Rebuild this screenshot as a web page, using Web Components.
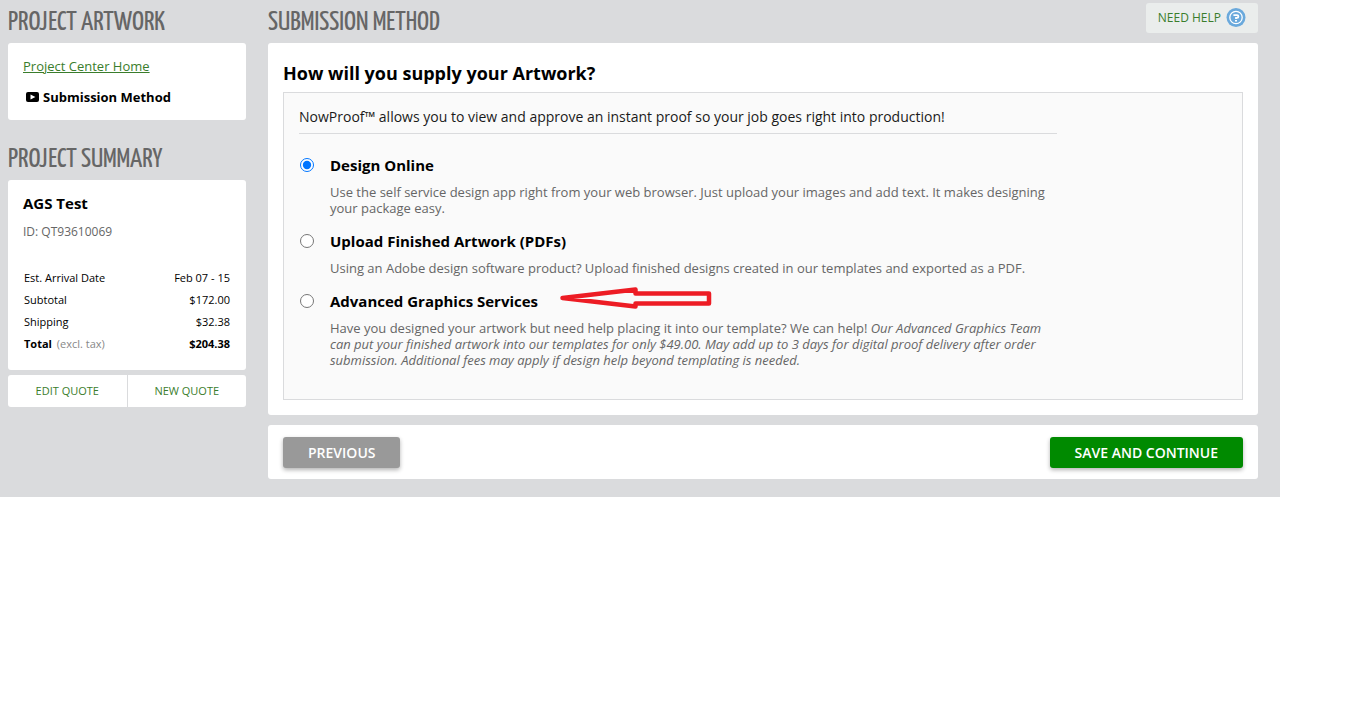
<!DOCTYPE html>
<html lang="en">
<head>
<meta charset="utf-8">
<meta name="viewport" content="width=device-width, initial-scale=1">
<title>Submission Method</title>
<style>
body{margin:0;background:#fff;color:#000;font-family:"Open Sans","Noto Sans",sans-serif;
--grey:#dadbdd;--green:#3a7d2c;--muted:#666}
</style>
</head>
<body>
<project-page>
  <project-nav slot="side"></project-nav>
  <project-summary slot="side"></project-summary>
  <submission-method></submission-method>
</project-page>
<script>
const define = (name, html) => customElements.define(name, class extends HTMLElement {
  constructor() {
    super();
    this.attachShadow({mode: 'open'}).innerHTML = '<style>*{box-sizing:border-box}</style>' + html;
  }
});

define('section-title', `
<style>
:host{display:block;padding-top:3px}
h2{margin:0;font:400 28px/40px "Yanone Kaffeesatz","Liberation Sans Narrow","Roboto Condensed","Liberation Sans",sans-serif;color:var(--muted);text-transform:uppercase;white-space:nowrap}
</style>
<h2><slot></slot></h2>`);

define('white-card', `
<style>
:host{display:block;background:#fff;border-radius:3px;padding:15px;box-sizing:border-box}
</style>
<slot></slot>`);

define('action-button', `
<style>
:host{display:block}
button{display:block;height:31px;padding:0 25px;border:0;border-radius:3px;background:var(--button,#999);color:#fff;font:600 14px/31px "Open Sans",sans-serif;text-transform:uppercase;box-shadow:0 2px 4px rgba(0,0,0,.3);cursor:pointer}
</style>
<button type="button"><slot></slot></button>`);

define('project-page', `
<style>
:host{display:block}
.page{display:flex;gap:22px;max-width:1280px;padding:0 22px 18px 8px;background:var(--grey)}
aside{flex:0 0 238px;display:flex;flex-direction:column;gap:17px}
main{flex:1;min-width:0}
</style>
<div class="page"><aside><slot name="side"></slot></aside><main><slot></slot></main></div>`);

define('project-nav', `
<style>
:host{display:block}
nav{font-size:13px;line-height:16px}
a{display:block;color:var(--green)}
.current{display:flex;align-items:center;gap:4px;margin:15px 0 0 3px;font-weight:700;color:#000;text-decoration:none}
</style>
<section-title>Project Artwork</section-title>
<white-card><nav>
  <a href="#home">Project Center Home</a>
  <a class="current" href="#method" aria-current="page"><svg width="13" height="10" viewBox="0 0 13 10" aria-hidden="true"><rect width="13" height="10" rx="2"/><path d="M4.5 2.4v5.2L9.4 5z" fill="#fff"/></svg>Submission Method</a>
</nav></white-card>`);

define('project-summary', `
<style>
:host{display:block}
h3{margin:0;font-size:15px;font-weight:700;line-height:16px}
p{margin:13px 0 27px;font-size:12px;line-height:16px;color:var(--muted)}
table{width:100%;border-collapse:collapse;font-size:11px;line-height:22px}
th,td{padding:0 1px;font-weight:400;text-align:left}
td{text-align:right}
.total th,.total td{font-weight:700}
small{margin-left:2px;font-size:11px;font-weight:400;color:#888}
.links{display:flex;gap:1px;margin-top:5px}
.links a{flex:1;background:#fff;border-radius:3px 0 0 3px;font-size:11px;line-height:32px;text-align:center;text-decoration:none;color:var(--green)}
.links a:last-child{border-radius:0 3px 3px 0}
</style>
<section-title>Project Summary</section-title>
<white-card>
  <h3>AGS Test</h3>
  <p>ID: QT93610069</p>
  <table>
    <tr><th scope="row">Est. Arrival Date</th><td>Feb 07 - 15</td></tr>
    <tr><th scope="row">Subtotal</th><td>$172.00</td></tr>
    <tr><th scope="row">Shipping</th><td>$32.38</td></tr>
    <tr class="total"><th scope="row">Total <small>(excl. tax)</small></th><td>$204.38</td></tr>
  </table>
</white-card>
<div class="links"><a href="#edit">EDIT QUOTE</a><a href="#new">NEW QUOTE</a></div>`);

define('help-button', `
<style>
:host{display:block}
button{display:flex;align-items:center;gap:5px;height:30px;padding:0 12px;border:0;border-radius:3px;background:#eaedec;color:var(--green);font:400 12px/30px "Open Sans",sans-serif;cursor:pointer}
</style>
<button type="button">NEED HELP
<svg width="20" height="20" viewBox="0 0 20 20" fill="none" aria-hidden="true"><circle cx="10" cy="9.500" r="9.500" fill="#6aa9dc"/><circle cx="10" cy="9.500" r="6.200" stroke="#fff" stroke-width="1.300"/><path d="M7.400 7.200H11q1.400 0 1.400 1.300T11 9.800h-1v1.300" stroke="#fff" stroke-width="1.800"/><path d="M9 12h2v1.500H9z" fill="#fff"/></svg>
</button>`);

define('submission-method', `
<style>
:host{display:block}
header{display:flex;justify-content:space-between;align-items:flex-start}
help-button{margin-top:3px}
h1{margin:4px 0 7px;font-size:18px;font-weight:700;line-height:23px}
fieldset{margin:0;min-width:0;padding:15px 15px 31px;border:1px solid #dadbdd;background:#fafafa}
.inner{max-width:758px}
.lead{margin:0 0 21px;padding-bottom:7px;border-bottom:1px solid #dadbdd;font-size:14px;line-height:18px;color:#1a1a1a}
.option{display:grid;grid-template-columns:14px 1fr;column-gap:17px;row-gap:9px;align-items:center}
.option + .option{margin-top:15px}
input{width:14px;height:14px;margin:0 1px}
label{justify-self:start;position:relative;font-size:15px;font-weight:700;line-height:20px}
.option p{grid-column:2;margin:0;font-size:13px;line-height:16px;color:var(--muted)}
svg.arrow{position:absolute;left:calc(100% + 20px);top:-4px;overflow:visible}
footer{display:flex;justify-content:space-between}
.actions{margin-top:10px;padding:12px 15px 11px}
.save{--button:#008a00}
</style>
<header><section-title>Submission Method</section-title><help-button></help-button></header>
<white-card>
  <h1 id="question">How will you supply your Artwork?</h1>
  <fieldset aria-labelledby="question"><div class="inner">
    <p class="lead">NowProof™ allows you to view and approve an instant proof so your job goes right into production!</p>
    <div class="option"><input type="radio" name="method" id="online" aria-describedby="d1" checked><label for="online">Design Online</label>
      <p id="d1">Use the self service design app right from your web browser. Just upload your images and add text. It makes designing your package easy.</p></div>
    <div class="option"><input type="radio" name="method" id="upload" aria-describedby="d2"><label for="upload">Upload Finished Artwork (PDFs)</label>
      <p id="d2">Using an Adobe design software product? Upload finished designs created in our templates and exported as a PDF.</p></div>
    <div class="option"><input type="radio" name="method" id="ags" aria-describedby="d3"><label for="ags">Advanced Graphics Services
      <svg class="arrow" width="154" height="22" viewBox="0 0 154 22" fill="none" stroke="#ed1c24" stroke-width="4.5" stroke-linejoin="round" aria-hidden="true"><path d="M4.500 11 77.500 2.500V6.500H151V16.500H77.500V19.500z"/></svg></label>
      <p id="d3">Have you designed your artwork but need help placing it into our template? We can help! <em>Our Advanced Graphics Team can put your finished artwork into our templates for only $49.00. May add up to 3 days for digital proof delivery after order submission. Additional fees may apply if design help beyond templating is needed.</em></p></div>
  </div></fieldset>
</white-card>
<white-card class="actions"><footer><action-button>Previous</action-button><action-button class="save">Save and Continue</action-button></footer></white-card>`);
</script>
</body>
</html>
